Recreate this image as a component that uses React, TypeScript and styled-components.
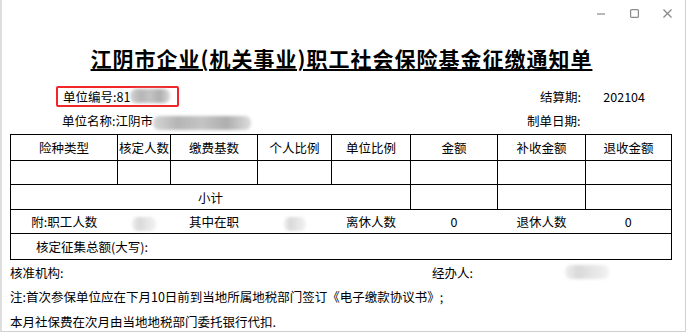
import styled, { createGlobalStyle } from "styled-components";

const Global = createGlobalStyle`
  html, body {
    margin: 0;
    padding: 0;
    background: #ffffff;
  }
  body {
    font-family: "Noto Sans CJK SC", "Liberation Sans", sans-serif;
    color: #000;
  }
`;

const Window = styled.div`
  width: 686px;
  height: 332px;
  box-sizing: border-box;
  border-left: 2px solid #dedede;
  border-right: 1px solid #cfcfcf;
  border-bottom: 1px solid #cfcfcf;
  background: #fff;
  overflow: hidden;
`;

const TitleBar = styled.div`
  height: 26px;
  display: flex;
  justify-content: flex-end;
  align-items: center;
  gap: 24px;
  padding-right: 13px;
`;

const Ctrl = styled.svg`
  width: 9px;
  height: 9px;
  stroke: #8a8a8a;
  stroke-width: 1.2;
  fill: none;
`;

const Heading = styled.h1`
  margin: 20px 0 0 0;
  text-align: center;
  font-size: 21px;
  line-height: 24px;
  font-weight: 700;
  letter-spacing: 1px;
  text-decoration: underline;
  text-decoration-thickness: 2px;
  text-underline-offset: 2px;
  padding-right: 4px;
`;

const Info = styled.div`
  margin-top: 15px;
  display: grid;
  grid-template-rows: 22px 27px;
  font-size: 12.5px;
  padding-left: 60px;
  padding-right: 40px;
`;

const InfoRow = styled.div`
  display: flex;
  align-items: center;
  justify-content: space-between;
`;

const Highlight = styled.div`
  display: flex;
  align-items: center;
  height: 17px;
  border: 2px solid #f0262a;
  border-radius: 2px;
  width: 114px;
  margin-left: -6px;
  padding-left: 5px;
  box-sizing: content-box;
`;

const Right = styled.div<{ $w: number }>`
  display: flex;
  align-items: center;
  width: ${(p) => p.$w}px;
  justify-content: space-between;
`;

const Blur = styled.span<{ $w: number; $dark?: boolean }>`
  display: inline-block;
  width: ${(p) => p.$w}px;
  height: 14px;
  vertical-align: middle;
  background: ${(p) =>
    p.$dark
      ? "linear-gradient(90deg, #d6d6d6 0%, #b5b5b5 25%, #c4c4c4 50%, #aeaeae 75%, #dcdcdc 100%)"
      : "linear-gradient(90deg, #efefef 0%, #d9d9d9 30%, #e4e4e4 60%, #f2f2f2 100%)"};
  filter: blur(1.5px);
  border-radius: 6px;
`;

const Sheet = styled.table`
  margin: 0 0 0 8px;
  border-collapse: collapse;
  table-layout: fixed;
  width: 661px;
  font-size: 12.5px;
`;

const Cell = styled.td<{ $align?: string; $pad?: number }>`
  border: 1px solid #000;
  padding: 0 0 0 ${(p) => p.$pad ?? 0}px;
  text-align: ${(p) => p.$align ?? "center"};
  white-space: nowrap;
  overflow: hidden;
`;

const Plain = styled.td`
  border-top: 1px solid #000;
  border-bottom: 1px solid #000;
  text-align: center;
  white-space: nowrap;
  padding: 0;
  &:first-child { border-left: 1px solid #000; }
  &:last-child { border-right: 1px solid #000; }
`;

const Row = styled.tr<{ $h: number }>`
  height: ${(p) => p.$h}px;
`;

const Foot = styled.div`
  padding-left: 8px;
  font-size: 12.5px;
  display: grid;
  grid-template-rows: 24px 25px 24px;
  align-items: center;
`;

const SignRow = styled.div`
  display: grid;
  grid-template-columns: 422px 133px auto;
  align-items: center;
`;

const widths = [107, 53, 87, 74, 79, 87, 88, 86];
const heads = ["险种类型", "核定人数", "缴费基数", "个人比例", "单位比例", "金额", "补收金额", "退收金额"];

export default function App() {
  return (
    <>
      <Global />
      <Window>
        <TitleBar>
          <Ctrl viewBox="0 0 9 9">
            <line x1="0" y1="5" x2="8" y2="5" />
          </Ctrl>
          <Ctrl viewBox="0 0 9 9">
            <rect x="0.6" y="0.6" width="7.8" height="7.8" rx="1" />
          </Ctrl>
          <Ctrl viewBox="0 0 9 9">
            <line x1="0.5" y1="0.5" x2="8.5" y2="8.5" />
            <line x1="8.5" y1="0.5" x2="0.5" y2="8.5" />
          </Ctrl>
        </TitleBar>
        <Heading>江阴市企业(机关事业)职工社会保险基金征缴通知单</Heading>
        <Info>
          <InfoRow>
            <Highlight>
              单位编号:81<Blur $w={40} $dark />
            </Highlight>
            <Right $w={105}>
              <span>结算期:</span>
              <span>202104</span>
            </Right>
          </InfoRow>
          <InfoRow>
            <span>
              单位名称:江阴市<Blur $w={98} $dark />
            </span>
            <Right $w={118}>
              <span>制单日期:</span>
            </Right>
          </InfoRow>
        </Info>
        <Sheet>
          <colgroup>
            {widths.map((w, i) => (
              <col key={i} style={{ width: w }} />
            ))}
          </colgroup>
          <tbody>
            <Row $h={26}>
              {heads.map((h) => (
                <Cell key={h}>{h}</Cell>
              ))}
            </Row>
            <Row $h={24}>
              {heads.map((h) => (
                <Cell key={h} />
              ))}
            </Row>
            <Row $h={25}>
              <Cell colSpan={5}>小计</Cell>
              <Cell />
              <Cell />
              <Cell />
            </Row>
            <Row $h={24}>
              <Plain>附:职工人数</Plain>
              <Plain>
                <Blur $w={24} />
              </Plain>
              <Plain>其中在职</Plain>
              <Plain>
                <Blur $w={22} />
              </Plain>
              <Plain>离休人数</Plain>
              <Plain>0</Plain>
              <Plain>退休人数</Plain>
              <Plain>0</Plain>
            </Row>
            <Row $h={26}>
              <Cell colSpan={8} $align="left" $pad={25}>
                核定征集总额(大写):
              </Cell>
            </Row>
          </tbody>
        </Sheet>
        <Foot>
          <SignRow>
            <span>核准机构:</span>
            <span>经办人:</span>
            <Blur $w={44} />
          </SignRow>
          <span>注:首次参保单位应在下月10日前到当地所属地税部门签订《电子缴款协议书》;</span>
          <span>本月社保费在次月由当地地税部门委托银行代扣.</span>
        </Foot>
      </Window>
    </>
  );
}
